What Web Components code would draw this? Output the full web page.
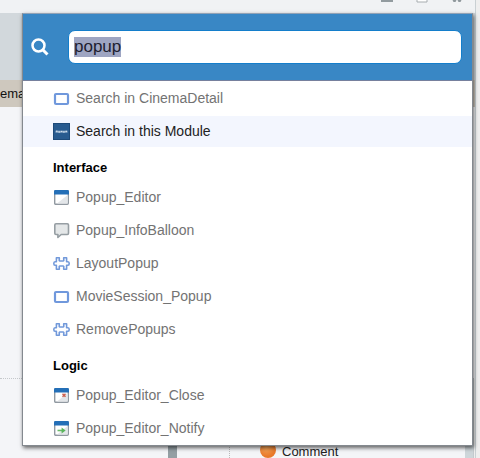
<!DOCTYPE html>
<html lang="en"><head><meta charset="utf-8"><title>Search</title>
<style>
html,body{height:100%;margin:0}
body{font-family:"Liberation Sans",Arial,sans-serif;position:relative;overflow:hidden;background:#f4f5f8}
search-popup{position:absolute;left:22px;right:7px;top:13px}
</style></head><body>
<work-space></work-space>
<search-popup>
<result-row icon="screen">Search in CinemaDetail</result-row>
<result-row icon="module" active>Search in this Module</result-row>
<result-heading>Interface</result-heading>
<result-row icon="window">Popup_Editor</result-row>
<result-row icon="balloon">Popup_InfoBalloon</result-row>
<result-row icon="puzzle">LayoutPopup</result-row>
<result-row icon="screen">MovieSession_Popup</result-row>
<result-row icon="puzzle">RemovePopups</result-row>
<result-heading>Logic</result-heading>
<result-row icon="close">Popup_Editor_Close</result-row>
<result-row icon="notify">Popup_Editor_Notify</result-row>
</search-popup>
<script>
const win = extra => `<rect x="1.7" y="1.7" width="13.6" height="13.6" rx="1" fill="#fff" stroke="#9199a1" stroke-width="1.4"/><path d="M14.6 6v8.6H4z" fill="#e3e6e9"/><path d="M1 2.4Q1 1 2.4 1h12.2Q16 1 16 2.4V5.6H1z" fill="#246fb7"/>${extra}`;
const ICONS = {
  screen: `<rect x="2" y="4" width="13" height="10" rx="1" fill="#fff" stroke="#7098dc" stroke-width="2.2"/>`,
  module: `<rect width="17" height="17" fill="#285b8f"/><rect x=".5" y=".5" width="16" height="16" fill="none" stroke="#1d4a79"/><path d="M2.5 8.7h12" stroke="#8fadca" stroke-width="2"/><path d="M3 8.2h1.5M5.5 9h1.6M8 8.4h1.2M10.2 9h1.4M12.6 8.3h1.4" stroke="#dbe6f0" stroke-width="1" fill="none"/>`,
  window: win(''),
  balloon: `<path d="M3 1.8h11.3q1.2 0 1.2 1.2v8.3q0 1.2-1.2 1.2H8.2L4.9 15.5v-3H3q-1.2 0-1.2-1.2V3q0-1.2 1.2-1.2z" fill="#e4e7e8" stroke="#969ea3" stroke-width="1.6" stroke-linejoin="round"/>`,
  puzzle: `<path d="M3.4 2.7H6.3V4.2Q5.8 5.8 7 6H10Q11.2 5.8 10.7 4.2V2.7H13.6V6.8H15Q16.2 6.8 16.2 8.5T15 10.2H13.6V14.3H10.7V12.8Q11.2 11.2 10 11H7Q5.8 11.2 6.3 12.8V14.3H3.4V10.2H2Q.8 10.2.8 8.5T2 6.8H3.4z" fill="#fff" stroke="#7299da" stroke-width="1.6" stroke-linejoin="round"/>`,
  close: win(`<path d="M9.5 6.7l3 3m0-3l-3 3" stroke="#cc6252" stroke-width="1.5"/>`),
  notify: win(`<path d="M4.5 10.5h5" stroke="#68b968" stroke-width="1.6"/><path d="M8.6 7.4l4 3.1-4 3.1z" fill="#5ab55c"/>`)
};
class Base extends HTMLElement {
  connectedCallback() {
    if (!this.shadowRoot) this.attachShadow({mode:'open'}).innerHTML = this.view();
  }
}
customElements.define('result-row', class extends Base {
  view() { return `<style>
:host{display:block;padding:1px 0}
button{display:flex;align-items:center;gap:6px;width:100%;height:31px;padding:0 30px 1px;border:0;background:none;color:#737373;font:14px/18px "Liberation Sans",Arial,sans-serif;text-align:left}
:host([active]) button{background:#f3f6fe;color:#222}
svg{width:17px;height:17px;flex:none}
</style><button type="button"><svg viewBox="0 0 17 17" aria-hidden="true">${ICONS[this.getAttribute('icon')]}</svg><slot></slot></button>`; }
});
customElements.define('result-heading', class extends Base {
  view() { return `<style>
:host{display:block}
h2{margin:0;padding:11px 30px 4px;font-size:13px;line-height:18px;color:#000}
</style><h2><slot></slot></h2>`; }
});
customElements.define('search-popup', class extends Base {
  view() { return `<style>
:host{display:block;background:#fff;border:1px solid #84898f;border-top-color:#91a2b6;box-shadow:1px 2px 4px #0009}
header{display:flex;align-items:center;gap:18px;padding:16px 10px 16px 7px;background:#3987c5;border-bottom:1px solid #76809d}
svg{width:20px;height:20px;flex:none}
label{display:contents}
input{box-sizing:border-box;flex:1;min-width:0;height:34px;padding:0 5px;border:1px solid #147ecb;border-radius:7px;background:#fff;color:#1d2030;font:17px/20px "Liberation Sans",Arial,sans-serif;outline:0}
input::selection{background:#9ea5c2;color:#1d2030}
main{display:block;padding:1px 0 0}
</style><header><label for="q"><svg viewBox="0 0 20 20" role="img" aria-label="Search"><circle cx="8.5" cy="8.5" r="6" fill="none" stroke="#fff" stroke-width="2.5"/><path d="M13 13l4.5 4.5" stroke="#fff" stroke-width="3"/></svg></label><input id="q" type="text" value="popup"></header><main><slot></slot></main>`; }
  connectedCallback() { super.connectedCallback(); const i = this.shadowRoot.querySelector('input'); i.focus(); i.select(); }
});
customElements.define('work-space', class extends Base {
  view() { return `<style>
:host{display:grid;grid-template-rows:13px 67px 27px 1fr 79px;height:100%;font-size:13px;color:#222}
.top{display:flex;justify-content:flex-end;gap:23px;padding-right:17px;background:#f0f2f4}
.top svg{width:12px;height:4px}
.band{background:#d2d8dc}
.tab{background:#cec8be;line-height:27px;color:#111}
.space{border-bottom:1px dotted #c5c8cb}
.foot{display:flex;align-items:stretch;padding-left:168px}
.bar{width:9px;background:#949fa4}
.guide{width:52px;border-right:1px dotted #bbb}
.item{display:flex;align-items:flex-end;gap:6px;padding-left:30px;flex:1}
.ball{width:16px;height:16px;border-radius:50%;background:radial-gradient(circle at 40% 30%,#f8a95e,#e9792a 65%)}
.item span{line-height:13px}
.edge{width:8px;background:#ced6da}
.side{width:7px;background:#eee;border-left:1px solid #c4cace;box-sizing:border-box}
.rail{position:absolute;right:0;top:0;bottom:0;width:4px;background:#eee;border-left:1px solid #c9d0d3}
</style><div class="top"><svg viewBox="0 0 12 4"><path d="M0 0h12v2H0z" fill="#929b9f"/></svg><svg viewBox="0 0 12 4"><path d="M1 0v2h10V0" fill="#fff" stroke="#a6acaf"/></svg><svg viewBox="0 0 12 4"><path d="M1.5 0l1 2h2l1-2zM6.500 0l1 2h2l1-2z" fill="#8f989c"/></svg></div>
<div class="band"></div><div class="tab">ema</div><div class="space"></div>
<div class="foot"><div class="bar"></div><div class="guide"></div><div class="item"><i class="ball"></i><span>Comment</span></div><div class="edge"></div><div class="side"></div></div><div class="rail"></div>`; }
});
</script></body></html>
